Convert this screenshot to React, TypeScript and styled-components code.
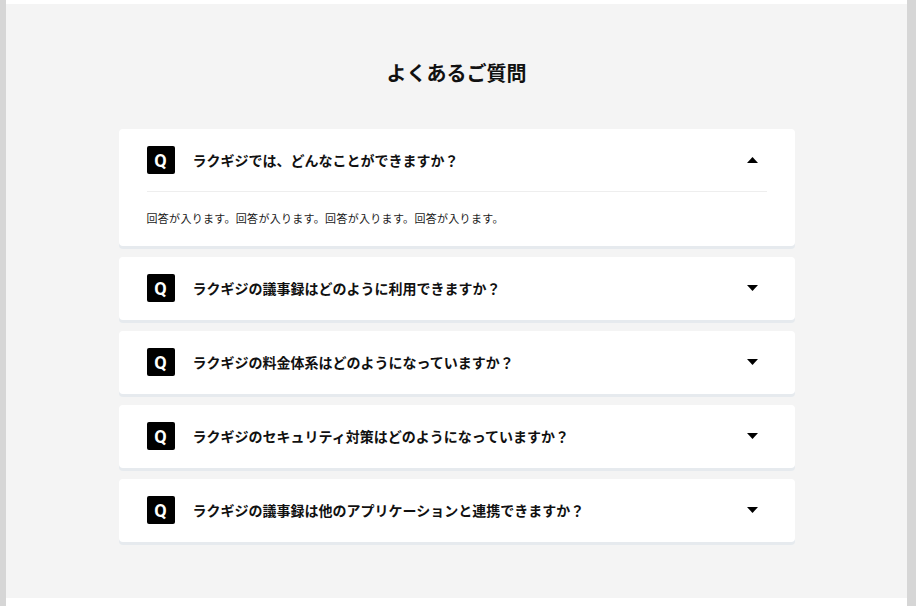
import styled, { createGlobalStyle } from "styled-components";
import { useState } from "react";

const GlobalStyle = createGlobalStyle`
  html, body {
    margin: 0;
    padding: 0;
    background: #d6d6d6;
  }
  * {
    box-sizing: border-box;
  }
`;

const faqs = [
  {
    q: "ラクギジでは、どんなことができますか？",
    a: "回答が入ります。回答が入ります。回答が入ります。回答が入ります。",
  },
  { q: "ラクギジの議事録はどのように利用できますか？", a: "回答が入ります。" },
  { q: "ラクギジの料金体系はどのようになっていますか？", a: "回答が入ります。" },
  { q: "ラクギジのセキュリティ対策はどのようになっていますか？", a: "回答が入ります。" },
  { q: "ラクギジの議事録は他のアプリケーションと連携できますか？", a: "回答が入ります。" },
];

export default function App() {
  const [open, setOpen] = useState<number | null>(0);

  return (
    <>
      <GlobalStyle />
      <Frame>
        <Page>
          <TopStrip />
          <FaqSection>
            <Title>よくあるご質問</Title>
            <List>
              {faqs.map((item, i) => (
                <Card key={i}>
                  <Question onClick={() => setOpen(open === i ? null : i)}>
                    <QBadge>Q</QBadge>
                    <QuestionText>{item.q}</QuestionText>
                    <Arrow $up={open === i} width="11" height="6" viewBox="0 0 11 6">
                      <path d="M0 6 L5.5 0 L11 6 Z" fill="#000" />
                    </Arrow>
                  </Question>
                  {open === i && <Answer>{item.a}</Answer>}
                </Card>
              ))}
            </List>
          </FaqSection>
          <BottomStrip />
        </Page>
      </Frame>
    </>
  );
}

const Frame = styled.div`
  height: 606px;
  padding: 0 9px 0 6px;
  background: #d6d6d6;
  overflow: hidden;
`;

const Page = styled.div`
  display: flex;
  flex-direction: column;
  height: 100%;
  background: #ffffff;
`;

const TopStrip = styled.div`
  height: 4px;
  background: #ffffff;
`;

const BottomStrip = styled.div`
  flex: 1;
  background: #ffffff;
`;

const FaqSection = styled.section`
  display: flex;
  flex-direction: column;
  align-items: center;
  padding: 54px 0 56px;
  background: #f4f4f4;
  font-family: "Noto Sans CJK JP", "Noto Sans", sans-serif;
`;

const Title = styled.h2`
  margin: 0 0 41px;
  font-size: 20px;
  line-height: 30px;
  font-weight: 700;
  color: #111111;
`;

const List = styled.div`
  display: flex;
  flex-direction: column;
  gap: 11px;
  width: 676px;
`;

const Card = styled.div`
  background: #ffffff;
  border-radius: 4px;
  box-shadow: 0 3px 0 #e6eaee;
`;

const Question = styled.div`
  display: flex;
  align-items: center;
  height: 63px;
  padding: 0 28px 1px;
  cursor: pointer;
`;

const QBadge = styled.span`
  display: flex;
  align-items: center;
  justify-content: center;
  flex-shrink: 0;
  width: 28px;
  height: 28px;
  margin-right: 18px;
  border-radius: 2px;
  background: #000000;
  color: #ffffff;
  font-family: "Roboto", "Noto Sans", sans-serif;
  font-size: 18px;
  font-weight: 700;
`;

const QuestionText = styled.span`
  flex: 1;
  font-size: 14px;
  font-weight: 700;
  line-height: 20px;
  color: #111111;
`;

const Arrow = styled.svg<{ $up: boolean }>`
  margin-right: 9px;
  transform: ${(p) => (p.$up ? "none" : "rotate(180deg)")};
`;

const Answer = styled.p`
  margin: -1px 28px 0;
  padding: 18px 0 20px;
  border-top: 1px solid #eeeeee;
  font-size: 11px;
  line-height: 16px;
  letter-spacing: 0.3px;
  color: #1a1a1a;
`;
